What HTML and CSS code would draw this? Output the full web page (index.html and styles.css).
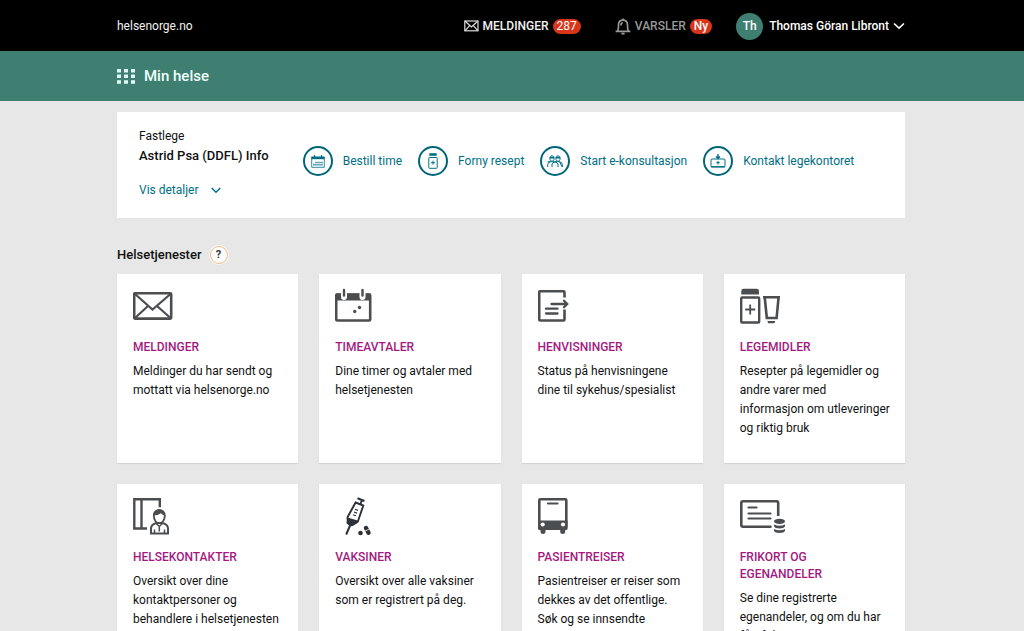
FILE: index.html
```html
<!DOCTYPE html>
<html lang="no">
<head>
<meta charset="utf-8">
<meta name="viewport" content="width=device-width, initial-scale=1">
<title>Min helse</title>
<link rel="stylesheet" href="styles.css">
</head>
<body>
<header class="topbar wrap">
  <a class="site" href="#">helsenorge.no</a>
  <nav class="topnav">
    <a class="toplink" href="#">
      <svg width="15" height="12" viewBox="0 0 15 12" fill="none" stroke="#ddd" stroke-width="1.2"><rect x=".8" y="1" width="13.2" height="9.8"/><path d="M1 1l6.4 6L14 1M1 10.8L5.6 5.600M14 10.800L9.300 5.600"/></svg>
      <span>MELDINGER</span><span class="badge">287</span>
    </a>
    <a class="toplink muted" href="#">
      <svg width="16" height="17" viewBox="0 0 16 17" fill="none" stroke="#999" stroke-width="1.7"><path d="M.6 13.300h14.800M2.700 13q.8-1.500.8-6C3.500 4 5.500 2.200 8 2.200S12.500 4 12.500 7q0 4.500.8 6M8 .5v2M6.400 15.600h3.200M5.900 7.500c0-1.700.6-2.600 1.800-3"/></svg>
      <span>VARSLER</span><span class="badge">Ny</span>
    </a>
    <button class="user" type="button">
      <span class="avatar">Th</span><span>Thomas Göran Libront</span>
      <svg width="12" height="8" viewBox="0 0 12 8" fill="none" stroke="#fff" stroke-width="1.6"><path d="M1 1.500l5 4.700 5-4.700"/></svg>
    </button>
  </nav>
</header>
<div class="titlebar wrap">
  <svg width="18" height="15" viewBox="0 0 18 15" fill="#e0fbf5"><path d="M0 0h4v3.500H0zM7 0h4v3.500H7zM14 0h4v3.500h-4zM0 5.600h4v3.500H0zM7 5.600h4v3.500H7zM14 5.600h4v3.500h-4zM0 11.200h4v3.500H0zM7 11.200h4v3.500H7zM14 11.200h4v3.500h-4z"/></svg>
  <h1>Min helse</h1>
</div>
<main class="wrap">
  <section class="doctor">
    <div class="doctor-info">
      <span>Fastlege</span>
      <h2>Astrid Psa (DDFL) Info</h2>
      <button class="details" type="button">Vis detaljer
        <svg width="10" height="7" viewBox="0 0 10 7" fill="none" stroke="currentColor" stroke-width="1.5"><path d="M.8 1l4.200 4.200L9.200 1"/></svg>
      </button>
    </div>
    <nav class="actions">
      <a href="#"><span class="ring"><svg width="14" height="13" viewBox="0 0 14 13" fill="none" stroke="currentColor"><path d="M.7 2h12.600v10.300H.7z" stroke-width=".8"/><path d="M.5 3h13" stroke-width="2.400"/><path d="M3.500 0v3M10.500 0v3" stroke-width="1.200"/><path d="M3 10.500V8M5 10.500V6M7 10.500V6M9 10.500V6M11 10.500V6" stroke-width="1.200" stroke-dasharray="1.500 .7"/></svg></span>Bestill time</a>
      <a href="#"><span class="ring"><svg width="10" height="16" viewBox="0 0 10 16" fill="none" stroke="currentColor"><path d="M1.300 1.500h7.400" stroke-width="2.600"/><rect x=".8" y="4.500" width="8.400" height="10.800" rx=".6"/><path d="M5 7.700v4M3 9.700h4"/></svg></span>Forny resept</a>
      <a href="#"><span class="ring"><svg width="16" height="13" viewBox="0 0 16 13" fill="none" stroke="currentColor" stroke-width="1"><path d="M2.900 3.500c0-3.600 4.200-3.600 4.200 0 0 3.600-4.200 3.600-4.200 0zM8.900 3.500c0-3.600 4.200-3.600 4.200 0 0 3.600-4.200 3.600-4.200 0zM.7 12V9.500Q.8 7.300 3.500 6.700M12.500 6.700q2.700.6 2.800 2.800V12zH.7M5 12V9Q5.500 7.300 8 7q2.500.3 3 2v3"/><path d="M2.800 2.600h4.400M8.800 2.600h4.400" stroke-width="1.800"/></svg></span>Start e-konsultasjon</a>
      <a href="#"><span class="ring"><svg width="16" height="14" viewBox="0 0 16 14" fill="none" stroke="currentColor"><rect x="1" y="5" width="14" height="7.800" rx="1"/><path d="M1 12.800h14" stroke-width="1.400"/><path d="M8 0v4.500M6 2.500l2 2 2-2" stroke-width="1.400"/><path d="M8 7v3.500M6.200 8.700h3.600"/></svg></span>Kontakt legekontoret</a>
    </nav>
  </section>

  <div class="section-head"><h2>Helsetjenester</h2><button class="help" type="button" aria-label="Hjelp">?</button></div>

  <section class="cards">
    <a class="card" href="#">
      <svg class="icon" width="48" height="40" viewBox="0 0 48 40" fill="none" stroke="#4b4e50" stroke-width="2.200"><rect x="1.200" y="6.200" width="37" height="25.400" rx="1" stroke-width="2.600"/><path d="M2 7l17.500 15.500L37.500 7M2 31l13-12M37.500 31L24 19"/></svg>
      <h3>MELDINGER</h3><p>Meldinger du har sendt og mottatt via helsenorge.no</p>
    </a>
    <a class="card" href="#">
      <svg class="icon" width="48" height="40" viewBox="0 0 48 40"><rect x="1.200" y="7.500" width="34" height="26" rx="1" fill="none" stroke="#4b4e50" stroke-width="2.600"/><path d="M1 6.500h34.500v7H1z" fill="#4b4e50"/><path d="M9 3v7M27.500 3v7" stroke="#fff" stroke-width="6" stroke-linecap="round"/><path d="M9 3v5.500M27.500 3v5.500" stroke="#4b4e50" stroke-width="2.400" stroke-linecap="round"/><circle cx="24.500" cy="20.500" r="1.700" fill="#4b4e50"/><circle cx="19.700" cy="24.500" r="1.700" fill="#4b4e50"/></svg>
      <h3>TIMEAVTALER</h3><p>Dine timer og avtaler med helsetjenesten</p>
    </a>
    <a class="card" href="#">
      <svg class="icon" width="48" height="40" viewBox="0 0 48 40" fill="none" stroke="#4b4e50" stroke-width="2.600"><path d="M26.500 10.500V5.300Q26.500 4.300 25.500 4.300H2.200Q1.200 4.300 1.200 5.300V32.500Q1.200 33.500 2.200 33.500H25.500Q26.500 33.500 26.500 32.500V22.500"/><path d="M8 21.700h11.500M8 26.500h11.500M13.500 17h14M26 13.800L29.200 17l-3.200 3.200" stroke-width="2.300" stroke-linecap="round"/></svg>
      <h3>HENVISNINGER</h3><p>Status på henvisningene dine til sykehus/spesialist</p>
    </a>
    <a class="card" href="#">
      <svg class="icon" width="48" height="40" viewBox="0 0 48 40" fill="none" stroke="#4b4e50" stroke-width="2.400"><path d="M1.300 7.500V4Q1.300 1.800 3.500 1.800h13Q19 1.800 19 4v3.500z" fill="#4b4e50" stroke="none"/><rect x="1.200" y="10.500" width="18" height="25" rx="1"/><path d="M10.200 17.500v10M5.200 22.500h10" stroke-width="1.800"/><path d="M23 10.300h17M24.800 11l2 20h9.800L38.500 11" stroke-width="2.600"/><path d="M27.300 34h8l-1 2.300h-6z" fill="#4b4e50" stroke="none"/></svg>
      <h3>LEGEMIDLER</h3><p>Resepter på legemidler og andre varer med informasjon om utleveringer og riktig bruk</p>
    </a>
    <a class="card" href="#">
      <svg class="icon" width="48" height="40" viewBox="0 0 48 40" fill="none" stroke="#4b4e50" stroke-width="2.400"><path d="M14 31.500H1.300V2.200h25.500v8M8.500 2.200v29.300"/><path d="M18 36.500v-5q0-4 5.500-5.500h6q5.500 1.500 5.500 5.500v5z" stroke-width="2"/><path d="M20.800 18.500c0-7.300 11-7.300 11 0 0 10.300-11 10.300-11 0z" stroke-width="1.800"/><path d="M20.500 18.500c-.2-8.200 11.600-8.200 11.600 0-2-.3-3-1-4.200-2.300q-2.800 2.300-7.400 2.300z" fill="#4b4e50" stroke="none"/><path d="M23.300 26.500l3 3 3-3M26.300 29.500v5M21.500 32.500v4M31.500 32.500v4" stroke-width="1.500"/></svg>
      <h3>HELSEKONTAKTER</h3><p>Oversikt over dine kontaktpersoner og behandlere i helsetjenesten</p>
    </a>
    <a class="card" href="#">
      <svg class="icon" width="48" height="40" viewBox="0 0 48 40" fill="none" stroke="#2c3135"><path d="M20.600 5.500l7.700 3-5.500 16.200L17 28.200l-4.200-2.600-.3-5.400z" stroke-width="1.900"/><path d="M12.500 20.500l11 3.300-1 2.200-5.500 3-2 .3-3.500-3z" fill="#2c3135" stroke="none"/><path d="M15.500 27.500L11.200 37.500M25.500 7l1.700-4.500M22.500 1.300l7 2.700" stroke-width="2"/><path d="M20 12.300l3 1.100M19 15l3 1.100M18 17.700l3 1.100" stroke-width="1.200"/><circle cx="25.500" cy="36" r="2.300" fill="#2c3135" stroke="none"/><path d="M31 31l2.500 4.800" stroke-width="4.400" stroke-linecap="round"/><path d="M29.800 34.200l4.600-2.200" stroke="#fff" stroke-width=".8"/></svg>
      <h3>VAKSINER</h3><p>Oversikt over alle vaksiner som er registrert på deg.</p>
    </a>
    <a class="card" href="#">
      <svg class="icon" width="48" height="40" viewBox="0 0 48 40"><rect x="1.300" y="2.300" width="27" height="28" rx="1" fill="none" stroke="#4b4e50" stroke-width="2.600"/><path d="M0 23.500h29.600v8q0 1.500-1.500 1.500H1.500Q0 33 0 31.500zM2.500 32h5v3q0 2-2.500 2t-2.500-2zM22.200 32h5v3q0 2-2.500 2t-2.500-2z" fill="#4b4e50"/><path d="M10 6.500h9.500" stroke="#4b4e50" stroke-width="2.200" stroke-linecap="round"/><circle cx="4.700" cy="27.500" r="2.100" fill="#fff"/><circle cx="25" cy="27.500" r="2.100" fill="#fff"/></svg>
      <h3>PASIENTREISER</h3><p>Pasientreiser er reiser som dekkes av det offentlige. Søk og se innsendte søknader.</p>
    </a>
    <a class="card" href="#">
      <svg class="icon" width="48" height="40" viewBox="0 0 48 40" fill="none" stroke="#4b4e50" stroke-width="2.600"><path d="M31.500 29.700H3Q1.300 29.700 1.300 28V6Q1.300 4.300 3 4.300H36.500Q38.200 4.300 38.200 6V19"/><path d="M8.500 10.500h8M8.500 16.500h22M8.500 21.500h22" stroke-width="2.200" stroke-linecap="round"/><ellipse cx="39.500" cy="24.300" rx="5.500" ry="2.600" fill="#4b4e50" stroke="none"/><path d="M34 27.500q5.500 2.700 11 0v1.800q-1 2.200-5.500 2.200T34 29.300zM34 32q5.500 2.700 11 0v1.800q-1 2.200-5.500 2.200T34 33.800z" fill="#4b4e50" stroke="none"/></svg>
      <h3>FRIKORT OG EGENANDELER</h3><p>Se dine registrerte egenandeler, og om du har fått frikort.</p>
    </a>
  </section>
</main>
</body>
</html>
```
FILE: styles.css
```css
* { box-sizing: border-box; }

body {
  margin: 0;
  background: #e7e7e7;
  color: #111;
  font: 12px/19px Roboto, "Liberation Sans", sans-serif;
}

h1, h2, h3, p { margin: 0; }
a { color: inherit; text-decoration: none; }
button { border: 0; padding: 0; background: none; color: inherit; font: inherit; cursor: pointer; }
svg { display: block; flex: none; }

.wrap { padding-left: 117px; padding-right: 119px; }

.topbar {
  display: flex;
  align-items: center;
  justify-content: space-between;
  min-height: 51px;
  padding-top: 1px;
  background: #000;
  color: #f2f2f2;
}

.topnav { display: flex; align-items: center; }
.toplink { display: flex; align-items: center; gap: 4px; margin-right: 34px; font-weight: 500; }
.toplink.muted { margin-right: 24px; color: #999; }

.badge {
  padding: 0 4px;
  border-radius: 8px;
  background: #d9351a;
  color: #fff;
  font-weight: 400;
  line-height: 15px;
}
.muted .badge { font-weight: 500; }

.user { display: flex; align-items: center; gap: 6px; color: #fff; font-weight: 500; }
.user svg { margin-left: -2px; }
.avatar {
  width: 27px;
  height: 27px;
  border-radius: 50%;
  background: #3e7f71;
  line-height: 27px;
  text-align: center;
}

.titlebar {
  display: flex;
  align-items: center;
  gap: 9px;
  min-height: 50px;
  background: #3e7f71;
  color: #eefffb;
}
.titlebar h1 { font-size: 15px; font-weight: 500; }

.doctor {
  display: flex;
  gap: 34px;
  margin-top: 11px;
  padding: 15px 22px 18px;
  background: #fff;
}
.doctor-info { display: flex; flex-direction: column; align-items: flex-start; white-space: nowrap; }
.doctor h2, .section-head h2 { font-size: 13px; font-weight: 500; }
.details { display: flex; align-items: center; gap: 12px; margin-top: 16px; color: #006f86; }

.actions { display: flex; gap: 16px; padding-top: 18px; color: #006f86; white-space: nowrap; }
.actions a { display: flex; align-items: center; gap: 10px; height: 32px; }
.ring {
  display: grid;
  place-items: center;
  width: 30px;
  height: 30px;
  border: 2px solid #006579;
  border-radius: 50%;
}

.section-head { display: flex; align-items: center; gap: 8px; padding: 27px 0 10px; }
.help {
  width: 18px;
  height: 18px;
  border: 1px solid #e9bd91;
  border-radius: 50%;
  background: #fff;
  box-shadow: 0 0 0 1px #fff8ef;
  color: #333;
  font-size: 11px;
  font-weight: 700;
  line-height: 16px;
}

.cards { display: grid; grid-template-columns: repeat(4, 1fr); gap: 21px; padding-bottom: 21px; }
.card { min-height: 189px; padding: 13px 15px 16px 16px; background: #fff; box-shadow: 0 1px 1px #d3d3d3; }
.card h3 { margin: 12px 0 6px; color: #a5197e; font-size: 12px; font-weight: 500; line-height: 17px; }
```
